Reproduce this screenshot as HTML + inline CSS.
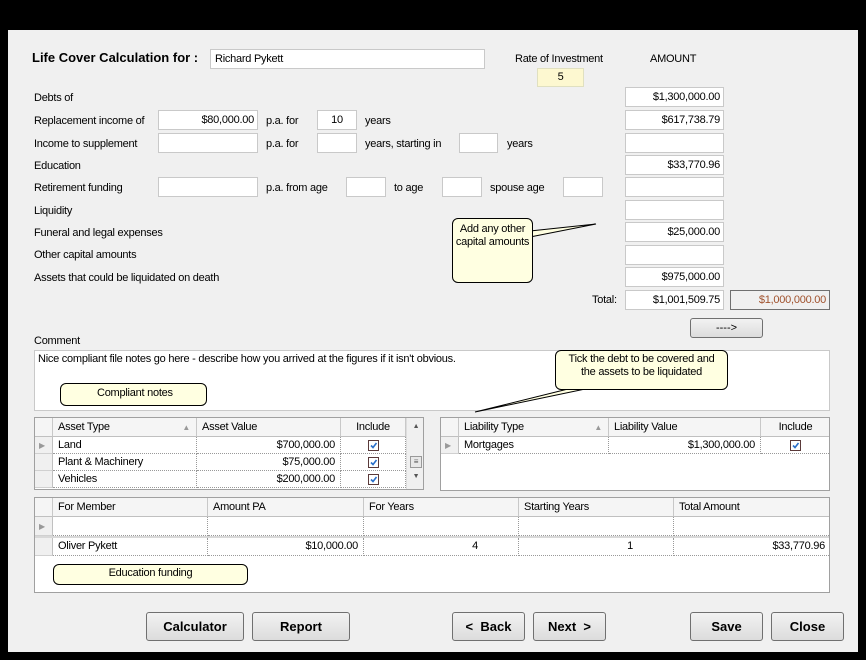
<!DOCTYPE html><html><head><style>
body{margin:0;width:866px;height:660px;background:#000;position:relative;overflow:hidden;font-family:"Liberation Sans",sans-serif;font-size:11px;letter-spacing:-0.25px;color:#000}
.p{position:absolute;left:8px;top:30px;width:850px;height:622px;background:#f0f0f0}
.a{position:absolute}
.l{position:absolute;line-height:14px;white-space:nowrap}
.b{position:absolute;background:#fff;border:1px solid #c9c9c9;box-sizing:border-box;height:20px;line-height:18px;text-align:right;padding-right:3px;white-space:nowrap}
.btn{position:absolute;box-sizing:border-box;height:29px;border:1px solid #707070;border-radius:3px;background:linear-gradient(#f2f2f2,#dcdcdc);font-weight:bold;font-size:13px;letter-spacing:0;text-align:center;line-height:27px}
.call{position:absolute;background:#ffffe1;border:1px solid #000;border-radius:6px;box-sizing:border-box;text-align:center;line-height:13px;font-size:11px}
.g{position:absolute;background:#fff;border:1px solid #a0a0a0;box-sizing:border-box;overflow:hidden}
.h{position:absolute;top:0;height:19px;line-height:19px;background:#f5f5f5;border-bottom:1px solid #c0c0c0;padding-left:5px;box-sizing:border-box;border-right:1px solid #c8c8c8}
.c{position:absolute;height:17px;line-height:17px;border-bottom:1px dotted #999;border-right:1px dotted #999;box-sizing:border-box;white-space:nowrap;padding:0 5px}
.rh{position:absolute;left:0;width:18px;height:17px;background:#f0f0f0;border-bottom:1px solid #d0d0d0;border-right:1px solid #c0c0c0;box-sizing:border-box}
.chk{display:inline-block;width:11px;height:11px;border:1px solid #5a3a3a;box-sizing:border-box;background:#fff;vertical-align:middle;position:relative}
.chk svg{position:absolute;left:0;top:0}
.r{text-align:right}
</style></head><body>
<div class="p"></div>
<div class="l" style="left:32px;top:51px;font-weight:bold;font-size:13px;letter-spacing:0">Life Cover Calculation for :</div>
<div class="b" style="left:210px;top:49px;width:275px;text-align:left;padding-left:4px">Richard Pykett</div>
<div class="l" style="left:515px;top:52px">Rate of Investment</div>
<div class="a" style="left:537px;top:68px;width:47px;height:19px;background:#fdf8d0;border:1px solid #e0e0c0;box-sizing:border-box;text-align:center;line-height:17px">5</div>
<div class="l" style="left:650px;top:52px">AMOUNT</div>

<div class="l" style="left:34px;top:91px">Debts of</div>
<div class="l" style="left:34px;top:114px">Replacement income of</div>
<div class="l" style="left:34px;top:137px">Income to supplement</div>
<div class="l" style="left:34px;top:159px">Education</div>
<div class="l" style="left:34px;top:181px">Retirement funding</div>
<div class="l" style="left:34px;top:204px">Liquidity</div>
<div class="l" style="left:34px;top:226px">Funeral and legal expenses</div>
<div class="l" style="left:34px;top:248px">Other capital amounts</div>
<div class="l" style="left:34px;top:271px">Assets that could be liquidated on death</div>

<div class="b" style="left:158px;top:110px;width:100px">$80,000.00</div>
<div class="l" style="left:266px;top:114px">p.a. for</div>
<div class="b" style="left:317px;top:110px;width:40px;text-align:center;padding:0">10</div>
<div class="l" style="left:365px;top:114px">years</div>

<div class="b" style="left:158px;top:133px;width:100px"></div>
<div class="l" style="left:266px;top:137px">p.a. for</div>
<div class="b" style="left:317px;top:133px;width:40px"></div>
<div class="l" style="left:365px;top:137px">years, starting in</div>
<div class="b" style="left:459px;top:133px;width:39px"></div>
<div class="l" style="left:507px;top:137px">years</div>

<div class="b" style="left:158px;top:177px;width:100px"></div>
<div class="l" style="left:266px;top:181px">p.a. from age</div>
<div class="b" style="left:346px;top:177px;width:40px"></div>
<div class="l" style="left:394px;top:181px">to age</div>
<div class="b" style="left:442px;top:177px;width:40px"></div>
<div class="l" style="left:490px;top:181px">spouse age</div>
<div class="b" style="left:563px;top:177px;width:40px"></div>

<div class="b" style="left:625px;top:87px;width:99px">$1,300,000.00</div>
<div class="b" style="left:625px;top:110px;width:99px">$617,738.79</div>
<div class="b" style="left:625px;top:133px;width:99px"></div>
<div class="b" style="left:625px;top:155px;width:99px">$33,770.96</div>
<div class="b" style="left:625px;top:177px;width:99px"></div>
<div class="b" style="left:625px;top:200px;width:99px"></div>
<div class="b" style="left:625px;top:222px;width:99px">$25,000.00</div>
<div class="b" style="left:625px;top:245px;width:99px"></div>
<div class="b" style="left:625px;top:267px;width:99px">$975,000.00</div>
<div class="l" style="left:592px;top:293px">Total:</div>
<div class="b" style="left:625px;top:290px;width:99px">$1,001,509.75</div>
<div class="b" style="left:730px;top:290px;width:100px;background:#f0f0f0;border-color:#707070;color:#a0522d">$1,000,000.00</div>
<div class="btn" style="left:690px;top:318px;width:73px;height:20px;line-height:18px;font-weight:normal;font-size:11px">----&gt;</div>

<div class="l" style="left:34px;top:334px">Comment</div>
<div class="a" style="left:34px;top:350px;width:796px;height:61px;background:#fff;border:1px solid #c9c9c9;box-sizing:border-box;padding:2px 0 0 3px">Nice compliant file notes go here - describe how you arrived at the figures if it isn't obvious.</div>

<svg class="a" style="left:0;top:0" width="866" height="660"><path d="M530 231 L596 224 L530 237" fill="#ffffe1" stroke="#000"/><path d="M572 388 L475 412 L590 388" fill="#ffffe1" stroke="#000"/></svg>
<div class="call" style="left:452px;top:218px;width:81px;height:65px;padding-top:4px">Add any other<br>capital amounts</div>
<div class="call" style="left:555px;top:350px;width:173px;height:40px;padding-top:2px">Tick the debt to be covered and<br>the assets to be liquidated</div>
<div class="call" style="left:60px;top:383px;width:147px;height:23px;line-height:18px;text-align:left;padding-left:36px">Compliant notes</div>

<div class="g" style="left:34px;top:417px;width:390px;height:73px">
<div class="h" style="left:0;width:18px"></div>
<div class="h" style="left:18px;width:144px">Asset Type<span style="float:right;color:#999;font-size:8px;margin-right:6px">▲</span></div>
<div class="h" style="left:162px;width:144px">Asset Value</div>
<div class="h" style="left:306px;width:65px;text-align:center;padding:0">Include</div>
<div class="a" style="left:371px;top:0;width:18px;height:72px;background:#f0f0f0;border-left:1px solid #ddd;text-align:center;font-size:7px;color:#555"><div style="margin-top:5px">▲</div><div style="margin:26px auto 0;width:10px;height:10px;border:1px solid #999;background:#e8e8e8;font-size:8px;line-height:9px">≡</div><div style="margin-top:5px">▼</div></div>
<div class="rh" style="top:19px;color:#999;font-size:8px;line-height:17px;padding-left:4px">▶</div><div class="rh" style="top:36px"></div><div class="rh" style="top:53px"></div>
<div class="c" style="left:18px;top:19px;width:144px">Land</div><div class="c r" style="left:162px;top:19px;width:144px">$700,000.00</div><div class="c" style="left:306px;top:19px;width:65px;text-align:center"><span class="chk"><svg width="9" height="9"><path d="M2 4.5 L4 6.5 L7.5 2" stroke="#2a6fc9" stroke-width="1.6" fill="none"/></svg></span></div>
<div class="c" style="left:18px;top:36px;width:144px">Plant &amp; Machinery</div><div class="c r" style="left:162px;top:36px;width:144px">$75,000.00</div><div class="c" style="left:306px;top:36px;width:65px;text-align:center"><span class="chk"><svg width="9" height="9"><path d="M2 4.5 L4 6.5 L7.5 2" stroke="#2a6fc9" stroke-width="1.6" fill="none"/></svg></span></div>
<div class="c" style="left:18px;top:53px;width:144px">Vehicles</div><div class="c r" style="left:162px;top:53px;width:144px">$200,000.00</div><div class="c" style="left:306px;top:53px;width:65px;text-align:center"><span class="chk"><svg width="9" height="9"><path d="M2 4.5 L4 6.5 L7.5 2" stroke="#2a6fc9" stroke-width="1.6" fill="none"/></svg></span></div>
</div>

<div class="g" style="left:440px;top:417px;width:390px;height:74px">
<div class="h" style="left:0;width:18px"></div>
<div class="h" style="left:18px;width:150px">Liability Type<span style="float:right;color:#999;font-size:8px;margin-right:6px">▲</span></div>
<div class="h" style="left:168px;width:152px">Liability Value</div>
<div class="h" style="left:320px;width:70px;text-align:center;padding:0">Include</div>
<div class="rh" style="top:19px;color:#999;font-size:8px;line-height:17px;padding-left:4px">▶</div>
<div class="c" style="left:18px;top:19px;width:150px">Mortgages</div><div class="c r" style="left:168px;top:19px;width:152px">$1,300,000.00</div><div class="c" style="left:320px;top:19px;width:70px;text-align:center"><span class="chk"><svg width="9" height="9"><path d="M2 4.5 L4 6.5 L7.5 2" stroke="#2a6fc9" stroke-width="1.6" fill="none"/></svg></span></div>
</div>

<div class="g" style="left:34px;top:497px;width:796px;height:96px">
<div class="h" style="left:0;width:18px"></div>
<div class="h" style="left:18px;width:155px">For Member</div>
<div class="h" style="left:173px;width:156px">Amount PA</div>
<div class="h" style="left:329px;width:155px">For Years</div>
<div class="h" style="left:484px;width:155px">Starting Years</div>
<div class="h" style="left:639px;width:157px">Total Amount</div>
<div class="rh" style="top:19px;height:19px;color:#999;font-size:8px;line-height:19px;padding-left:4px">▶</div>
<div class="c" style="left:18px;top:19px;width:155px;height:19px"></div><div class="c" style="left:173px;top:19px;width:156px;height:19px"></div><div class="c" style="left:329px;top:19px;width:155px;height:19px"></div><div class="c" style="left:484px;top:19px;width:155px;height:19px"></div><div class="c" style="left:639px;top:19px;width:157px;height:19px"></div>
<div class="a" style="left:0;top:38px;width:796px;height:2px;background:#d8d8d8"></div>
<div class="rh" style="top:40px;height:18px"></div>
<div class="c" style="left:18px;top:40px;width:155px;height:18px">Oliver Pykett</div><div class="c r" style="left:173px;top:40px;width:156px;height:18px">$10,000.00</div><div class="c" style="left:329px;top:40px;width:155px;height:18px;text-align:right;padding-right:40px">4</div><div class="c" style="left:484px;top:40px;width:155px;height:18px;text-align:right;padding-right:40px">1</div><div class="c r" style="left:639px;top:40px;width:157px;height:18px">$33,770.96</div>
</div>
<div class="call" style="left:53px;top:564px;width:195px;height:21px;line-height:17px">Education funding</div>

<div class="btn" style="left:146px;top:612px;width:98px">Calculator</div>
<div class="btn" style="left:252px;top:612px;width:98px">Report</div>
<div class="btn" style="left:452px;top:612px;width:73px">&lt; &nbsp;Back</div>
<div class="btn" style="left:533px;top:612px;width:73px">Next &nbsp;&gt;</div>
<div class="btn" style="left:690px;top:612px;width:73px">Save</div>
<div class="btn" style="left:771px;top:612px;width:73px">Close</div>
</body></html>
